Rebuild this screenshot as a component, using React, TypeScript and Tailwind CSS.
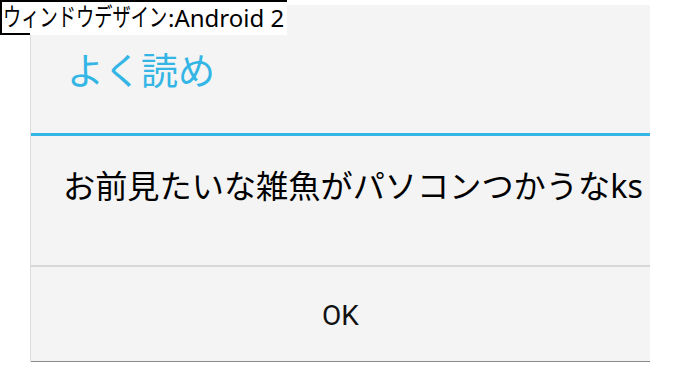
import React from 'react'

const jp = "font-['Noto_Sans','Noto_Sans_CJK_JP',sans-serif]"

export default function App() {
  return (
    <div className={`relative w-[680px] h-[368px] bg-white ${jp}`}>
      {/* dialog */}
      <div className="absolute left-[30px] top-[5px] w-[620px] h-[357px] flex flex-col bg-[#f4f4f4] border-l border-[#dcdcdc]">
        <div className="h-[128px] flex items-center pl-[36px] pt-[2px]">
          <span className="text-[37px] leading-none text-[#33b5e5]">よく読め</span>
        </div>
        <div className="h-[3px] bg-[#33b5e5]" />
        <div className="h-[129px] flex items-center pl-[32px] pb-[28px]">
          <span className="text-[32.2px] leading-none text-black whitespace-nowrap">
            お前見たいな雑魚がパソコンつかうなks
          </span>
        </div>
        <div className="h-[2px] bg-[#d8d8d8]" />
        <div className="flex-1 flex items-center justify-center pt-[4px]">
          <span className="font-['Roboto',sans-serif] text-[28px] leading-none text-[#111]">OK</span>
        </div>
        <div className="h-[1px] bg-[#8a8a8a]" />
      </div>

      {/* window caption label */}
      <div className="absolute left-0 top-0 w-[287px] h-[35px] bg-white border-t-2 border-l-2 border-black flex items-center pl-[1px] pb-[1px] whitespace-nowrap text-black">
        <span className="inline-block w-[165px]">
          <span className="inline-block origin-left scale-x-[0.73] text-[25px] leading-none">ウィンドウデザイン</span>
        </span>
        <span className="text-[24px] leading-none">:Android 2</span>
        <span className="absolute left-[-2px] bottom-0 w-[30px] h-[2px] bg-black" />
      </div>
    </div>
  )
}
